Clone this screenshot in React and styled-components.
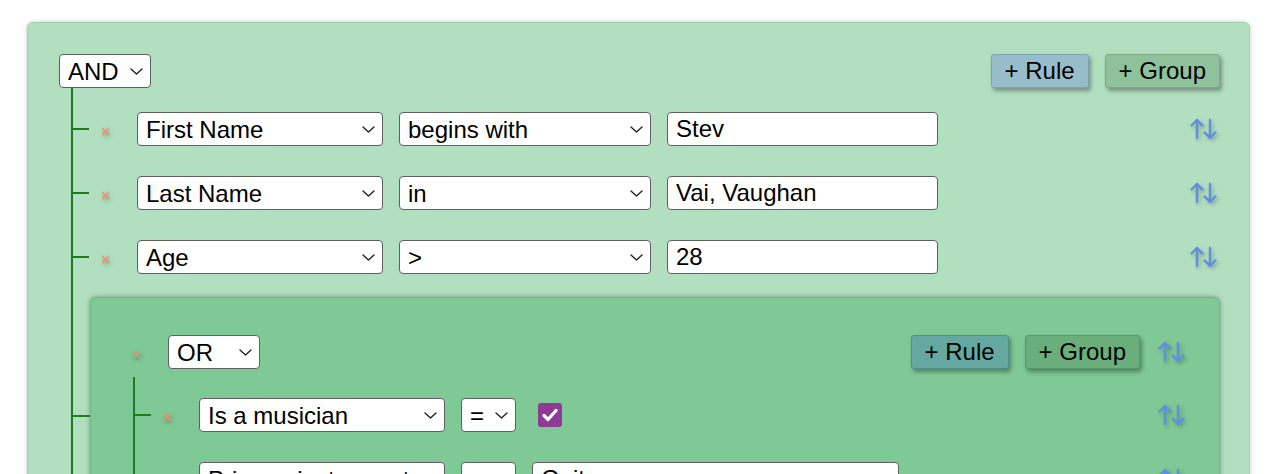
import React from 'react'
import styled, { createGlobalStyle, css } from 'styled-components'

const GlobalStyle = createGlobalStyle`
  html, body {
    margin: 0;
    background: #ffffff;
    overflow: hidden;
  }
  body {
    font-family: "Liberation Sans", Arial, sans-serif;
    color: #000;
  }
`

const Page = styled.div`
  box-sizing: border-box;
  height: 474px;
  overflow: hidden;
  padding: 22px 30px 0 27px;
`

const GroupBox = styled.div`
  position: relative;
  background: ${p => (p.$nested ? '#7ec996' : '#b3dfc1')};
  border: 1px solid ${p => (p.$nested ? '#6fb888' : '#a3d4b2')};
  border-radius: 6px;
  box-shadow: ${p => (p.$nested
    ? '0 0 5px rgba(0, 0, 0, 0.35)'
    : '0 0 4px rgba(0, 0, 0, 0.22)')};
  padding: ${p => (p.$nested ? '37px 31px 40px 30px' : '31px 29px 40px 31px')};
  ${p => p.$nested && css`
    margin-top: -7px;
    &::before {
      content: '';
      position: absolute;
      left: -20px;
      top: 117px;
      width: 19px;
      height: 2px;
      background: #1f7d1f;
    }
  `}
`

const Header = styled.div`
  display: flex;
  align-items: center;
  height: 34px;
`

const Spacer = styled.div`
  flex: 1;
`

const Actions = styled.div`
  display: flex;
  align-items: center;
  gap: 16px;
`

const Body = styled.div`
  display: flex;
  flex-direction: column;
  gap: 30px;
  margin-left: 12px;
  margin-top: ${p => (p.$nested ? '8px' : '0')};
  padding-top: ${p => (p.$nested ? '21px' : '24px')};
  padding-left: 17px;
  border-left: 2px solid #1f7d1f;
`

const Row = styled.div`
  position: relative;
  display: flex;
  align-items: center;
  height: 34px;
  &::before {
    content: '';
    position: absolute;
    left: -19px;
    top: calc(50% - 1px);
    width: 18px;
    height: 2px;
    background: #1f7d1f;
  }
`

const RemoveBtn = styled.button`
  width: 31px;
  height: 20px;
  margin-right: 16px;
  padding: 0;
  border: none;
  background: none;
  display: flex;
  align-items: center;
  justify-content: center;
  cursor: pointer;
  svg {
    margin-top: 4px;
    filter: drop-shadow(1px 2px 2px rgba(0, 0, 0, 0.3));
  }
`

const AddBtn = styled.button`
  height: 34px;
  padding: 0 13px;
  font-family: inherit;
  font-size: 24px;
  color: #000;
  border-radius: 3px;
  border: 1px solid ${p => p.$border};
  background: ${p => p.$bg};
  box-shadow: 2px 3px 4px rgba(0, 0, 0, 0.35);
  cursor: pointer;
`

const SelectWrap = styled.div`
  position: relative;
  width: ${p => p.$width}px;
  height: 34px;
  margin-right: ${p => p.$gap || 0}px;
  flex-shrink: 0;
  svg {
    position: absolute;
    right: 8px;
    top: 14px;
    pointer-events: none;
  }
`

const Select = styled.select`
  appearance: none;
  box-sizing: border-box;
  width: 100%;
  height: 100%;
  padding: 0 24px 0 8px;
  font-family: inherit;
  font-size: 24px;
  color: #000;
  background: #fff;
  border: 1px solid #5f5f5f;
  border-radius: 4px;
`

const TextInput = styled.input`
  box-sizing: border-box;
  width: ${p => p.$width}px;
  height: 34px;
  padding: 0 8px;
  font-family: inherit;
  font-size: 24px;
  color: #000;
  background: #fff;
  border: 1px solid #5f5f5f;
  border-radius: 4px;
  outline: none;
`

const CheckBox = styled.span`
  width: 24px;
  height: 24px;
  margin-left: 6px;
  border-radius: 3px;
  background: #8e3a96;
  display: flex;
  align-items: center;
  justify-content: center;
`

const ShiftBtn = styled.button`
  width: 30px;
  height: 24px;
  padding: 0;
  margin-left: ${p => (p.$auto ? 'auto' : '18px')};
  border: none;
  background: none;
  display: flex;
  align-items: center;
  justify-content: flex-start;
  cursor: pointer;
  svg {
    filter: drop-shadow(2px 2px 2px rgba(0, 0, 0, 0.25));
  }
`

const Chevron = () => (
  <svg width="13" height="7" viewBox="0 0 13 7">
    <polyline points="1,1 6.5,6 12,1" fill="none" stroke="#222" strokeWidth="1.4" strokeLinecap="round" strokeLinejoin="round" />
  </svg>
)

const Cross = () => (
  <svg width="9" height="9" viewBox="0 0 9 9">
    <path d="M1.5 1.5 L7.5 7.5 M7.5 1.5 L1.5 7.5" stroke="#e89272" strokeWidth="1.7" strokeLinecap="round" />
  </svg>
)

const ShiftIcon = () => (
  <svg width="28" height="22" viewBox="0 0 28 22">
    <g fill="none" stroke="#5c8fe0" strokeWidth="2.4" strokeLinecap="round" strokeLinejoin="round">
      <path d="M7 2 L7 20 M1.5 7.5 L7 2 L12.5 7.5" />
      <path d="M20 2 L20 20 M14.5 14.5 L20 20 L25.5 14.5" />
    </g>
  </svg>
)

const Check = () => (
  <svg width="16" height="14" viewBox="0 0 16 14">
    <polyline points="2,7.5 6,11.5 14,2.5" fill="none" stroke="#fff" strokeWidth="3.2" strokeLinecap="round" strokeLinejoin="round" />
  </svg>
)

const Dropdown = ({ width, gap, value, options }) => (
  <SelectWrap $width={width} $gap={gap}>
    <Select defaultValue={value}>
      {options.map(o => <option key={o} value={o}>{o}</option>)}
    </Select>
    <Chevron />
  </SelectWrap>
)

const fields = ['First Name', 'Last Name', 'Age', 'Is a musician', 'Primary instrument']
const operators = ['=', '!=', '<', '>', 'begins with', 'in']

const Rule = ({ rule }) => (
  <Row>
    <RemoveBtn aria-label="remove rule"><Cross /></RemoveBtn>
    <Dropdown width={246} gap={16} value={rule.field} options={fields} />
    <Dropdown width={rule.opWidth || 252} gap={16} value={rule.operator} options={operators} />
    {rule.checkbox
      ? <CheckBox role="checkbox" aria-checked="true"><Check /></CheckBox>
      : <TextInput $width={rule.valueWidth || 271} defaultValue={rule.value} />}
    <ShiftBtn $auto aria-label="shift"><ShiftIcon /></ShiftBtn>
  </Row>
)

const Group = ({ group, nested }) => (
  <GroupBox $nested={nested}>
    <Header>
      {nested && <RemoveBtn aria-label="remove group"><Cross /></RemoveBtn>}
      <Dropdown width={92} value={group.combinator} options={['AND', 'OR']} />
      <Spacer />
      <Actions>
        <AddBtn $bg={nested ? '#64a8a1' : '#98bdca'} $border={nested ? '#4f8f88' : '#7ea3b0'}>+ Rule</AddBtn>
        <AddBtn $bg={nested ? '#6aaf7b' : '#8fc29b'} $border={nested ? '#559a66' : '#78ab84'}>+ Group</AddBtn>
      </Actions>
      {nested && <ShiftBtn aria-label="shift"><ShiftIcon /></ShiftBtn>}
    </Header>
    <Body $nested={nested}>
      {group.rules.map((r, i) => r.rules
        ? <Group key={i} group={r} nested />
        : <Rule key={i} rule={r} />)}
    </Body>
  </GroupBox>
)

const query = {
  combinator: 'AND',
  rules: [
    { field: 'First Name', operator: 'begins with', value: 'Stev' },
    { field: 'Last Name', operator: 'in', value: 'Vai, Vaughan' },
    { field: 'Age', operator: '>', value: '28' },
    {
      combinator: 'OR',
      rules: [
        { field: 'Is a musician', operator: '=', opWidth: 55, checkbox: true },
        { field: 'Primary instrument', operator: '=', opWidth: 55, value: 'Guitar', valueWidth: 367 }
      ]
    }
  ]
}

export default function App() {
  return (
    <Page>
      <GlobalStyle />
      <Group group={query} />
    </Page>
  )
}
